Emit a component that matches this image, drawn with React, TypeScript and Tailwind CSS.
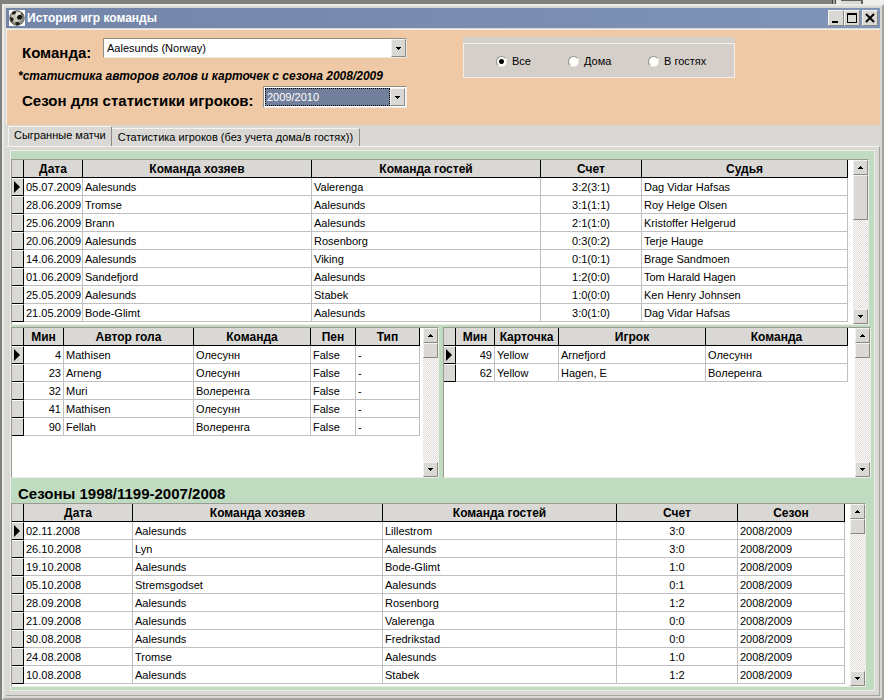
import { useState } from 'react'

const matches = [
  ['05.07.2009', 'Aalesunds', 'Valerenga', '3:2(3:1)', 'Dag Vidar Hafsas'],
  ['28.06.2009', 'Tromse', 'Aalesunds', '3:1(1:1)', 'Roy Helge Olsen'],
  ['25.06.2009', 'Brann', 'Aalesunds', '2:1(1:0)', 'Kristoffer Helgerud'],
  ['20.06.2009', 'Aalesunds', 'Rosenborg', '0:3(0:2)', 'Terje Hauge'],
  ['14.06.2009', 'Aalesunds', 'Viking', '0:1(0:1)', 'Brage Sandmoen'],
  ['01.06.2009', 'Sandefjord', 'Aalesunds', '1:2(0:0)', 'Tom Harald Hagen'],
  ['25.05.2009', 'Aalesunds', 'Stabek', '1:0(0:0)', 'Ken Henry Johnsen'],
  ['21.05.2009', 'Bode-Glimt', 'Aalesunds', '3:0(1:0)', 'Dag Vidar Hafsas'],
]

const goals = [
  ['4', 'Mathisen', 'Олесунн', 'False', '-'],
  ['23', 'Arneng', 'Олесунн', 'False', '-'],
  ['32', 'Muri', 'Волеренга', 'False', '-'],
  ['41', 'Mathisen', 'Олесунн', 'False', '-'],
  ['90', 'Fellah', 'Волеренга', 'False', '-'],
]

const cards = [
  ['49', 'Yellow', 'Arnefjord', 'Олесунн'],
  ['62', 'Yellow', 'Hagen, E', 'Волеренга'],
]

const archive = [
  ['02.11.2008', 'Aalesunds', 'Lillestrom', '3:0', '2008/2009'],
  ['26.10.2008', 'Lyn', 'Aalesunds', '3:0', '2008/2009'],
  ['19.10.2008', 'Aalesunds', 'Bode-Glimt', '1:0', '2008/2009'],
  ['05.10.2008', 'Stremsgodset', 'Aalesunds', '0:1', '2008/2009'],
  ['28.09.2008', 'Aalesunds', 'Rosenborg', '1:2', '2008/2009'],
  ['21.09.2008', 'Aalesunds', 'Valerenga', '0:0', '2008/2009'],
  ['30.08.2008', 'Aalesunds', 'Fredrikstad', '0:0', '2008/2009'],
  ['24.08.2008', 'Tromse', 'Aalesunds', '1:0', '2008/2009'],
  ['10.08.2008', 'Aalesunds', 'Stabek', '1:2', '2008/2009'],
]

type Column = { title: string; width: string; align?: string }

const raised =
  'border border-t-[#f4f3ef] border-l-[#f4f3ef] border-r-[#8a8984] border-b-[#8a8984] bg-[#d9d8d4]'

function Arrow({ up }: { up?: boolean }) {
  return (
    <svg width="5" height="3" viewBox="0 0 5 3" shapeRendering="crispEdges">
      <path d={up ? 'M2 0h1v1h1v1h1v1H0V2h1V1h1z' : 'M0 0h5v1H4v1H3v1H2V2H1V1H0z'} />
    </svg>
  )
}

function ScrollBar({ thumb }: { thumb: string }) {
  return (
    <div className="flex w-[15px] shrink-0 flex-col bg-[repeating-conic-gradient(#ffffff_0_25%,#dddad6_0_50%)] bg-[length:2px_2px]">
      <button aria-label="Вверх" className={`flex h-[15px] items-center justify-center ${raised}`}>
        <Arrow up />
      </button>
      <div className={`${thumb} ${raised}`} />
      <button
        aria-label="Вниз"
        className={`mt-auto flex h-[15px] items-center justify-center ${raised}`}
      >
        <Arrow />
      </button>
    </div>
  )
}

function DataGrid({
  columns,
  rows,
  label,
  thumb,
  gap,
}: {
  columns: Column[]
  rows: string[][]
  label: string
  thumb: string
  gap: string
}) {
  return (
    <div className="flex border border-t-[#9c9a95] border-l-[#9c9a95] border-r-[#eeede8] border-b-[#eeede8] bg-white">
      <div className={`min-w-0 flex-1 pb-[2px] ${gap}`}>
        <table aria-label={label} className="w-full table-fixed border-separate border-spacing-0">
          <colgroup>
            <col className="w-[12px]" />
            {columns.map((c) => (
              <col key={c.title} className={c.width} />
            ))}
          </colgroup>
          <thead>
            <tr className="h-[18px] bg-[#d9d8d4] text-[12px] leading-[16px]">
              <td className="border-r border-b border-black p-0" />
              {columns.map((c) => (
                <th
                  key={c.title}
                  className="overflow-hidden border-r border-b border-black p-0 whitespace-nowrap"
                >
                  {c.title}
                </th>
              ))}
            </tr>
          </thead>
          <tbody>
            {rows.map((row, i) => (
              <tr key={i} className="h-[18px]">
                <td className="border-t border-r border-b border-t-white border-r-black border-b-black bg-[#d9d8d4] p-0 pl-[2px]">
                  {i === 0 && (
                    <svg width="6" height="12" viewBox="0 0 6 12" className="block">
                      <path d="M0 0L6 6L0 12z" />
                    </svg>
                  )}
                </td>
                {row.map((cell, j) => (
                  <td
                    key={j}
                    className={`border-r border-b border-[#c0c0c0] p-0 px-[2px] leading-[16px] whitespace-nowrap ${columns[j].align || ''}`}
                  >
                    {cell}
                  </td>
                ))}
              </tr>
            ))}
          </tbody>
        </table>
      </div>
      <ScrollBar thumb={thumb} />
    </div>
  )
}

function Ball() {
  return (
    <svg width="16" height="16" viewBox="0 0 16 16" className="bg-white">
      <circle cx="8" cy="8" r="7.3" fill="#8f8f84" stroke="#55554d" strokeWidth="0.8" />
      <circle cx="7.5" cy="7" r="5.4" fill="#c9c9be" />
      <circle cx="9.5" cy="4.5" r="2.6" fill="#e6e6dd" />
      <path d="M3.5 1.8L6 1l1.2 1.4L5.6 4.6 3 4.4z" fill="#1b1b16" />
      <path d="M9 5.2l3-.6 1.6 2.2-1.4 2.8-3 .2-1.4-2.4z" fill="#15150f" />
      <path d="M1 7.6l2.6-.4 1.2 2.2L3.4 12 1.6 11z" fill="#22221c" />
      <path d="M6.2 12.6l2.8-.8 2 1.6-1.4 1.8H7z" fill="#22221c" />
      <path d="M12.6 2.6l1.8 2-.8.6-1.6-1.8z" fill="#33332c" />
    </svg>
  )
}

function DropArrow() {
  return (
    <span
      className={`pointer-events-none absolute top-px right-px bottom-px flex w-[15px] items-center justify-center ${raised}`}
    >
      <Arrow />
    </span>
  )
}

export default function App() {
  const [place, setPlace] = useState('Все')

  const sunken = 'border border-t-[#8f8d88] border-l-[#8f8d88] border-r-[#ece9e2] border-b-[#ece9e2]'
  const titleButton = `flex h-4 w-4 items-center justify-center ${raised}`

  return (
    <div className="flex min-h-screen flex-col bg-[#808080] pb-[2px] pl-[2px] font-['Liberation_Sans',Arial,sans-serif] text-[11px] text-black">
      <div className="flex h-1 justify-end">
        <div className="w-1 border-x border-[#404040] bg-[#a0a0a0]" />
        <div className="w-[5px] bg-[#e8e8e8]" />
        <div className="w-[22px] border-t border-r-2 border-[#606060] bg-[#d9d8d4]" />
        <div className="w-[21px] bg-[#eeeeec]" />
      </div>

      <div className="flex flex-1 flex-col border-2 border-t-[#eceae5] border-r-[#a5a39e] border-b-[#a5a39e] border-l-[#eceae5] bg-[#d9d8d4] p-[2px]">
        <div className="flex h-5 items-center bg-gradient-to-r from-[#7385a9] to-[#7f94b7] pr-[2px] pl-[3px]">
          <Ball />
          <h1 className="ml-[2px] flex-1 text-[12px] font-bold text-white">История игр команды</h1>
          <button aria-label="Свернуть" className={titleButton}>
            <svg width="10" height="10" viewBox="0 0 10 10">
              <path d="M1 8h6v2H1z" />
            </svg>
          </button>
          <button aria-label="Развернуть" className={titleButton}>
            <svg width="10" height="10" viewBox="0 0 10 10" shapeRendering="crispEdges">
              <path d="M0 0h10v10H0zM1 2v7h8V2z" fillRule="evenodd" />
            </svg>
          </button>
          <button aria-label="Закрыть" className={`ml-[2px] ${titleButton}`}>
            <svg width="10" height="10" viewBox="0 0 10 10">
              <path d="M1 1l8 8M9 1l-8 8" stroke="#000" strokeWidth="2" />
            </svg>
          </button>
        </div>

        <div className="mt-px flex h-24 items-start border-t border-l border-[#f2efe9] bg-[#efc9a5] pt-2 pl-[15px]">
          <div className="w-[385px]">
            <div className="flex h-5">
              <label htmlFor="team" className="w-[81px] pt-[7px] text-[15px] leading-[16px] font-bold">
                Команда:
              </label>
              <div className="relative flex-1">
                <select
                  id="team"
                  className={`h-5 w-full appearance-none bg-white pr-4 pl-[3px] leading-[16px] ${sunken}`}
                >
                  <option>Aalesunds (Norway)</option>
                </select>
                <DropArrow />
              </div>
            </div>
            <p className="-ml-1 pt-[11px] text-[12px] leading-[14px] font-bold whitespace-nowrap italic">
              *статистика авторов голов и карточек с сезона 2008/2009
            </p>
            <div className="mt-[3px] flex h-[22px]">
              <label
                htmlFor="season"
                className="w-[241px] pt-[7px] text-[15px] leading-[16px] font-bold whitespace-nowrap"
              >
                Сезон для статистики игроков:
              </label>
              <div className={`relative flex-1 bg-white p-px pr-4 ${sunken}`}>
                <select
                  id="season"
                  className="block h-[18px] w-full appearance-none border border-dotted border-black bg-[#73809b] pl-px leading-[16px] text-white"
                >
                  <option>2009/2010</option>
                </select>
                <DropArrow />
              </div>
            </div>
          </div>

          <fieldset aria-label="Место игры" className="-mt-px ml-14 h-[41px] w-[272px] bg-[#d4cfc8] pt-[6px]">
            <div className="flex h-[35px] items-center border border-[#f2efea] pt-px pl-[31px]">
              {['Все', 'Дома', 'В гостях'].map((name) => (
                <label key={name} className="flex w-20 items-center gap-[5px] pl-px whitespace-nowrap last:w-auto first:w-[72px]">
                  <input
                    type="radio"
                    name="place"
                    checked={place === name}
                    onChange={() => setPlace(name)}
                    className="h-[11px] w-[11px] appearance-none rounded-full border border-t-[#8f8d88] border-r-[#efece6] border-b-[#efece6] border-l-[#8f8d88] bg-white checked:bg-[radial-gradient(circle,#000_2px,#fff_3px)]"
                  />
                  {name}
                </label>
              ))}
            </div>
          </fieldset>
        </div>

        <div role="tablist" className="flex h-[21px] items-end pl-[2px]">
          <button
            role="tab"
            aria-selected="true"
            className="h-5 border-t border-r border-l border-t-[#f4f3ef] border-r-[#8a8984] border-l-[#f4f3ef] px-[5px] pb-[3px] leading-[15px] whitespace-nowrap"
          >
            Сыгранные матчи
          </button>
          <button
            role="tab"
            aria-selected="false"
            className="h-[18px] border-t border-r border-t-[#f4f3ef] border-r-[#8a8984] px-[6px] leading-[15px] whitespace-nowrap"
          >
            Статистика игроков (без учета дома/в гостях))
          </button>
        </div>

        <div className="flex flex-1 flex-col border-t border-r border-b border-t-[#f4f3ef] border-r-[#a5a39e] border-b-[#a5a39e] p-1 pt-[3px]">
          <div className="flex flex-1 flex-col border border-[#eeede8] bg-[#c0dcc0] pt-2 pr-[3px] pb-[3px]">
            <div className="mr-[2px]">
              <DataGrid
                label="Сыгранные матчи"
                rows={matches}
                thumb="h-[45px]"
                gap="pr-[5px]"
                columns={[
                  { title: 'Дата', width: 'w-[59px]' },
                  { title: 'Команда хозяев', width: 'w-[229px]' },
                  { title: 'Команда гостей', width: 'w-[229px]' },
                  { title: 'Счет', width: 'w-[101px]', align: 'text-center' },
                  { title: 'Судья', width: 'w-[206px]' },
                ]}
              />
            </div>

            <div className="mt-[2px] grid min-h-[151px] flex-1 grid-cols-2 gap-1">
              <DataGrid
                label="Голы"
                rows={goals}
                thumb="h-[15px]"
                gap="pr-[3px]"
                columns={[
                  { title: 'Мин', width: 'w-[40px]', align: 'text-right' },
                  { title: 'Автор гола', width: 'w-[130px]' },
                  { title: 'Команда', width: 'w-[117px]' },
                  { title: 'Пен', width: 'w-[45px]' },
                  { title: 'Тип', width: 'w-[64px]' },
                ]}
              />
              <DataGrid
                label="Карточки"
                rows={cards}
                thumb="h-[15px]"
                gap="pr-[7px]"
                columns={[
                  { title: 'Мин', width: 'w-[39px]', align: 'text-right' },
                  { title: 'Карточка', width: 'w-[64px]' },
                  { title: 'Игрок', width: 'w-[147px]' },
                  { title: 'Команда', width: 'w-[142px]' },
                ]}
              />
            </div>

            <h2 className="h-[25px] pt-2 pl-[7px] text-[15px] leading-[16px] font-bold">
              Сезоны 1998/1199-2007/2008
            </h2>

            <div className="mr-[5px]">
              <DataGrid
                label="Сезоны 1998/1199-2007/2008"
                rows={archive}
                thumb="h-[15px]"
                gap="pr-[5px]"
                columns={[
                  { title: 'Дата', width: 'w-[109px]' },
                  { title: 'Команда хозяев', width: 'w-[250px]' },
                  { title: 'Команда гостей', width: 'w-[234px]' },
                  { title: 'Счет', width: 'w-[121px]', align: 'text-center' },
                  { title: 'Сезон', width: 'w-[107px]' },
                ]}
              />
            </div>
          </div>
        </div>
      </div>
    </div>
  )
}
